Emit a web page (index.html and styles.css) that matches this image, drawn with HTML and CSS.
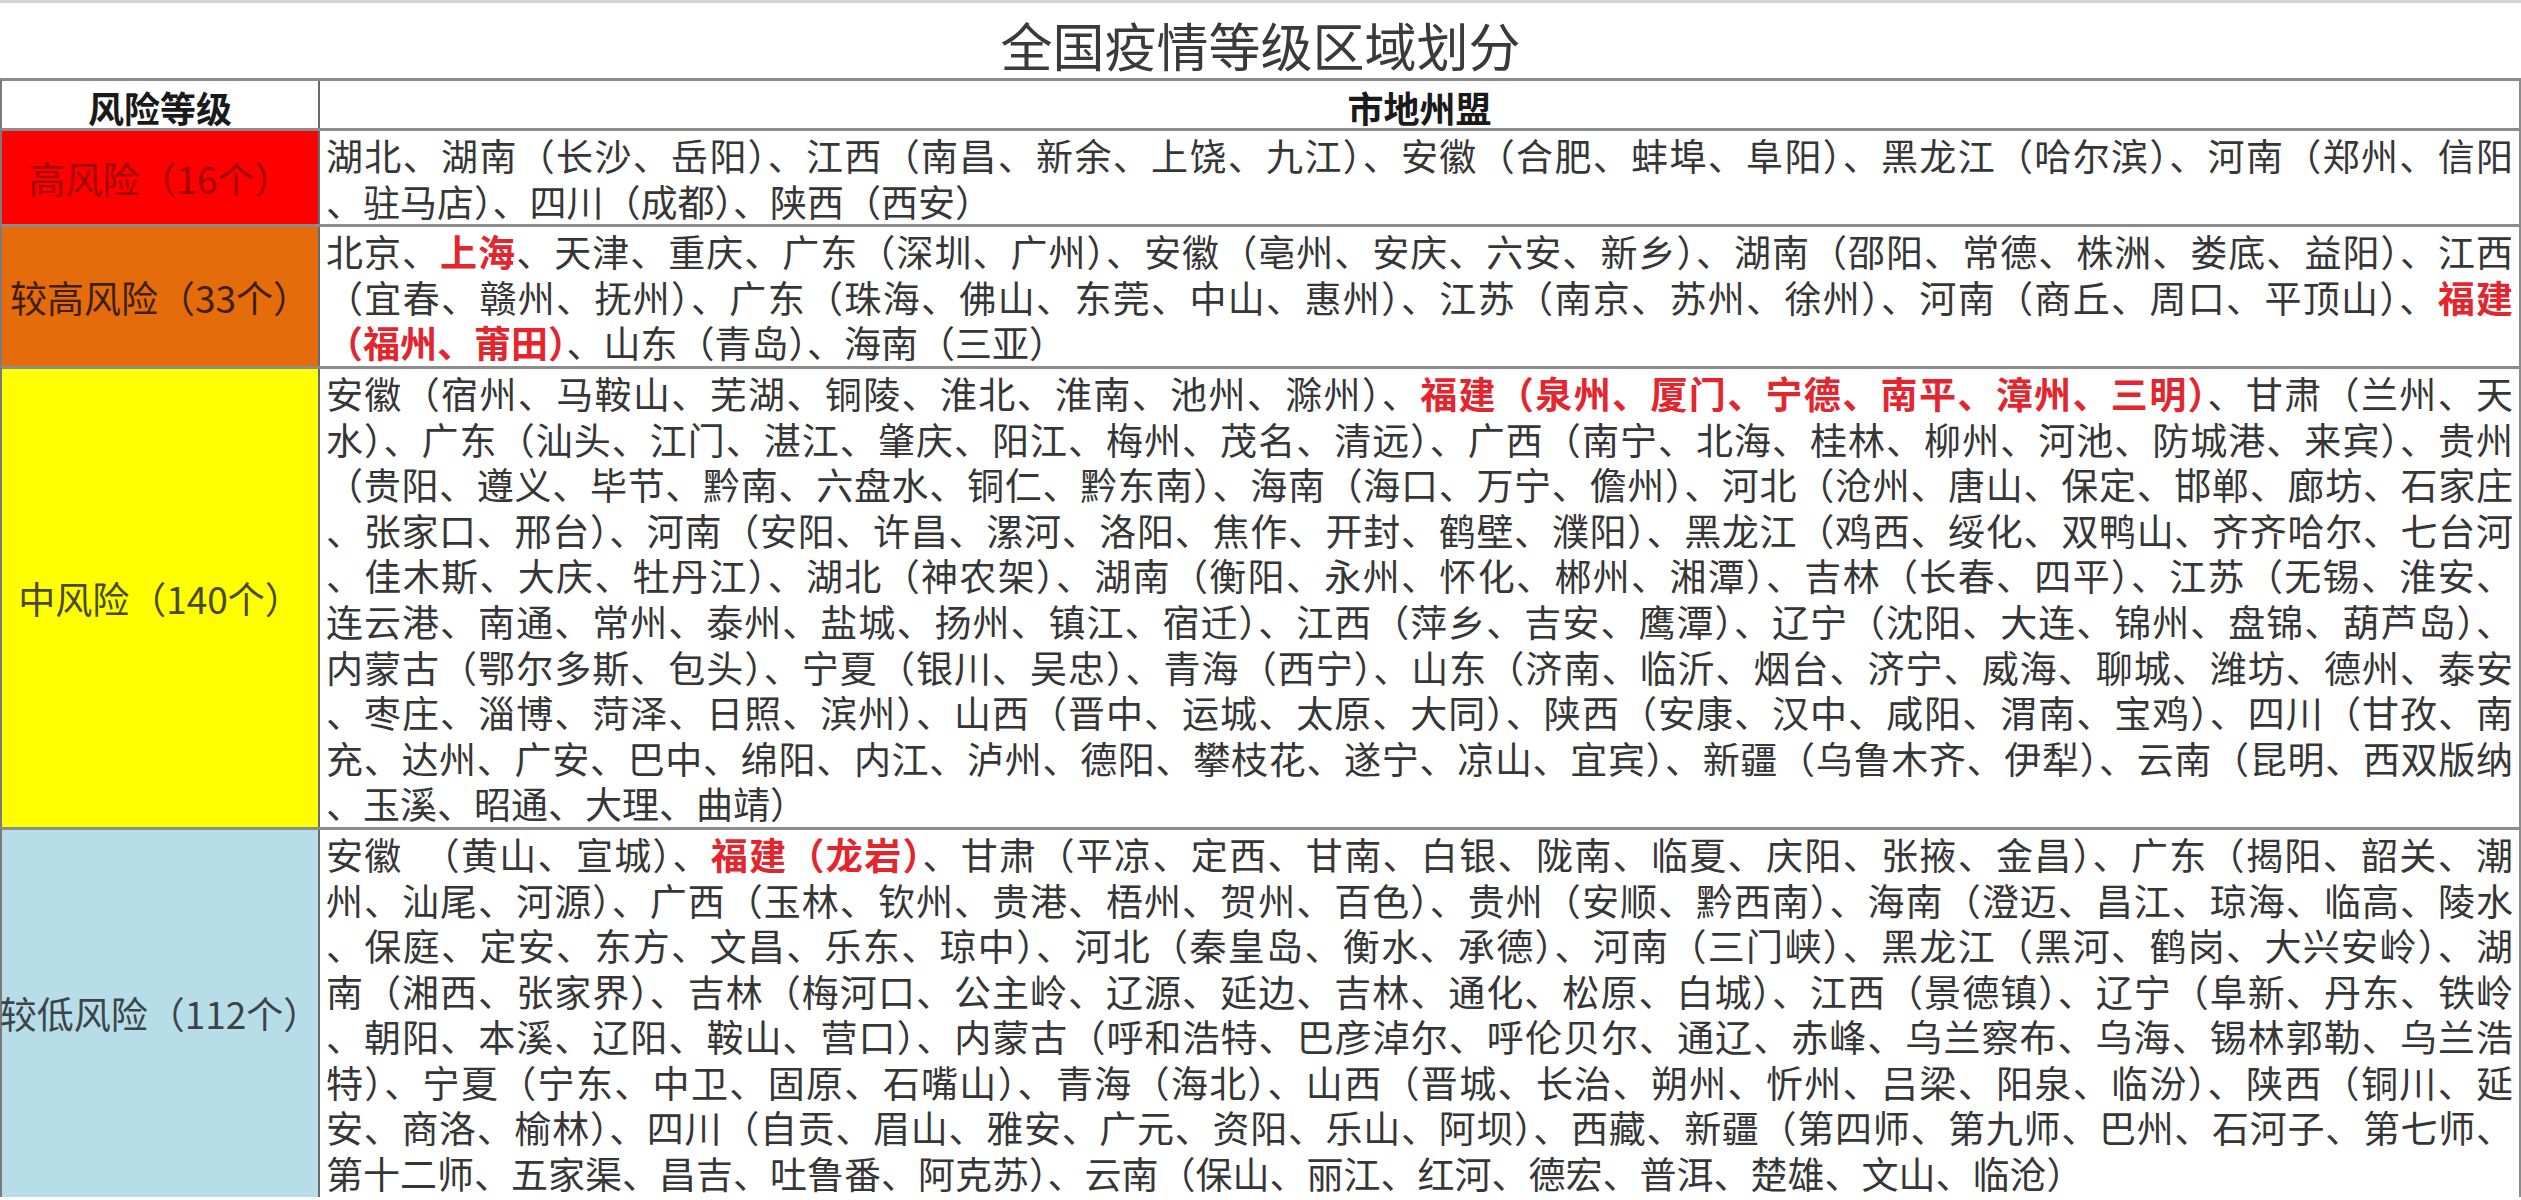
FILE: index.html
```html
<!DOCTYPE html>
<html lang="zh-CN">
<head>
<meta charset="utf-8">
<title>全国疫情等级区域划分</title>
<link rel="stylesheet" href="styles.css">
</head>
<body>
<div class="sheet">
  <h1 class="title">全国疫情等级区域划分</h1>
  <div class="table">
    <div class="row head">
      <div class="level">风险等级</div>
      <div class="areas">市地州盟</div>
    </div>
    <div class="row high">
      <div class="level">高风险（16个）</div>
      <div class="areas">
        <span class="ln">湖北、湖南（长沙、岳阳）、江西（南昌、新余、上饶、九江）、安徽（合肥、蚌埠、阜阳）、黑龙江（哈尔滨）、河南（郑州、信阳</span>
        <span class="ln end">、驻马店）、四川（成都）、陕西（西安）</span>
      </div>
    </div>
    <div class="row upper">
      <div class="level">较高风险（33个）</div>
      <div class="areas">
        <span class="ln">北京、<b class="hl">上海</b>、天津、重庆、广东（深圳、广州）、安徽（亳州、安庆、六安、新乡）、湖南（邵阳、常德、株洲、娄底、益阳）、江西</span>
        <span class="ln">（宜春、赣州、抚州）、广东（珠海、佛山、东莞、中山、惠州）、江苏（南京、苏州、徐州）、河南（商丘、周口、平顶山）、<b class="hl">福建</b></span>
        <span class="ln end"><b class="hl">（福州、莆田）</b>、山东（青岛）、海南（三亚）</span>
      </div>
    </div>
    <div class="row middle">
      <div class="level">中风险（140个）</div>
      <div class="areas">
        <span class="ln">安徽（宿州、马鞍山、芜湖、铜陵、淮北、淮南、池州、滁州）、<b class="hl">福建（泉州、厦门、宁德、南平、漳州、三明）</b>、甘肃（兰州、天</span>
        <span class="ln">水）、广东（汕头、江门、湛江、肇庆、阳江、梅州、茂名、清远）、广西（南宁、北海、桂林、柳州、河池、防城港、来宾）、贵州</span>
        <span class="ln">（贵阳、遵义、毕节、黔南、六盘水、铜仁、黔东南）、海南（海口、万宁、儋州）、河北（沧州、唐山、保定、邯郸、廊坊、石家庄</span>
        <span class="ln">、张家口、邢台）、河南（安阳、许昌、漯河、洛阳、焦作、开封、鹤壁、濮阳）、黑龙江（鸡西、绥化、双鸭山、齐齐哈尔、七台河</span>
        <span class="ln">、佳木斯、大庆、牡丹江）、湖北（神农架）、湖南（衡阳、永州、怀化、郴州、湘潭）、吉林（长春、四平）、江苏（无锡、淮安、</span>
        <span class="ln">连云港、南通、常州、泰州、盐城、扬州、镇江、宿迁）、江西（萍乡、吉安、鹰潭）、辽宁（沈阳、大连、锦州、盘锦、葫芦岛）、</span>
        <span class="ln">内蒙古（鄂尔多斯、包头）、宁夏（银川、吴忠）、青海（西宁）、山东（济南、临沂、烟台、济宁、威海、聊城、潍坊、德州、泰安</span>
        <span class="ln">、枣庄、淄博、菏泽、日照、滨州）、山西（晋中、运城、太原、大同）、陕西（安康、汉中、咸阳、渭南、宝鸡）、四川（甘孜、南</span>
        <span class="ln">充、达州、广安、巴中、绵阳、内江、泸州、德阳、攀枝花、遂宁、凉山、宜宾）、新疆（乌鲁木齐、伊犁）、云南（昆明、西双版纳</span>
        <span class="ln end">、玉溪、昭通、大理、曲靖）</span>
      </div>
    </div>
    <div class="row lower">
      <div class="level">较低风险（112个）</div>
      <div class="areas">
        <span class="ln">安徽　（黄山、宣城）、<b class="hl">福建（龙岩）</b>、甘肃（平凉、定西、甘南、白银、陇南、临夏、庆阳、张掖、金昌）、广东（揭阳、韶关、潮</span>
        <span class="ln">州、汕尾、河源）、广西（玉林、钦州、贵港、梧州、贺州、百色）、贵州（安顺、黔西南）、海南（澄迈、昌江、琼海、临高、陵水</span>
        <span class="ln">、保庭、定安、东方、文昌、乐东、琼中）、河北（秦皇岛、衡水、承德）、河南（三门峡）、黑龙江（黑河、鹤岗、大兴安岭）、湖</span>
        <span class="ln">南（湘西、张家界）、吉林（梅河口、公主岭、辽源、延边、吉林、通化、松原、白城）、江西（景德镇）、辽宁（阜新、丹东、铁岭</span>
        <span class="ln">、朝阳、本溪、辽阳、鞍山、营口）、内蒙古（呼和浩特、巴彦淖尔、呼伦贝尔、通辽、赤峰、乌兰察布、乌海、锡林郭勒、乌兰浩</span>
        <span class="ln">特）、宁夏（宁东、中卫、固原、石嘴山）、青海（海北）、山西（晋城、长治、朔州、忻州、吕梁、阳泉、临汾）、陕西（铜川、延</span>
        <span class="ln">安、商洛、榆林）、四川（自贡、眉山、雅安、广元、资阳、乐山、阿坝）、西藏、新疆（第四师、第九师、巴州、石河子、第七师、</span>
        <span class="ln end">第十二师、五家渠、昌吉、吐鲁番、阿克苏）、云南（保山、丽江、红河、德宏、普洱、楚雄、文山、临沧）</span>
      </div>
    </div>
  </div>
</div>
</body>
</html>
```

FILE: styles.css
```css
html, body {
  margin: 0;
  padding: 0;
  background: #ffffff;
}

body {
  font-family: "Noto Sans CJK SC", "Noto Sans", sans-serif;
  color: #363636;
  overflow: hidden;
}

.sheet {
  width: 2521px;
  height: 1200px;
  overflow: hidden;
}

.title {
  margin: 0;
  box-sizing: border-box;
  height: 78px;
  border-top: 3px solid #d4d4d4;
  padding-top: 8px;
  font-size: 52px;
  font-weight: 400;
  line-height: 67px;
  text-align: center;
  color: #3a3a3a;
}

.row {
  display: grid;
  grid-template-columns: 318px 1fr;
  border-top: 3px solid #8c8c8c;
  border-left: 2px solid #7a7a7a;
  border-right: 2px solid #8c8c8c;
}

.level {
  box-sizing: border-box;
  border-right: 2px solid #6a6a6a;
  display: flex;
  align-items: center;
  justify-content: center;
  font-size: 37px;
  white-space: nowrap;
  letter-spacing: 0;
}

.areas {
  padding: 2px 6px 0 6px;
  font-size: 37px;
  line-height: 45.6px;
  color: #363636;
}

.ln {
  display: block;
  text-align: justify;
  text-align-last: justify;
}

.ln.end {
  text-align-last: left;
}

.hl {
  color: #e3262e;
  font-weight: 600;
}

.head .level,
.head .areas {
  height: 47px;
  padding: 6px 0 0 0;
  box-sizing: border-box;
  line-height: 41px;
  font-size: 36px;
  font-weight: 700;
  color: #1a1a1a;
  text-align: center;
  letter-spacing: 0;
}

.high .level {
  background: #ff0000;
  color: #a30000;
}

.upper .level {
  background: #e46c0a;
  color: #3e1e05;
}

.middle .level {
  background: #ffff00;
  color: #4a4a2a;
}

.lower .level {
  background: #b7dde8;
  color: #3c4448;
}
```
